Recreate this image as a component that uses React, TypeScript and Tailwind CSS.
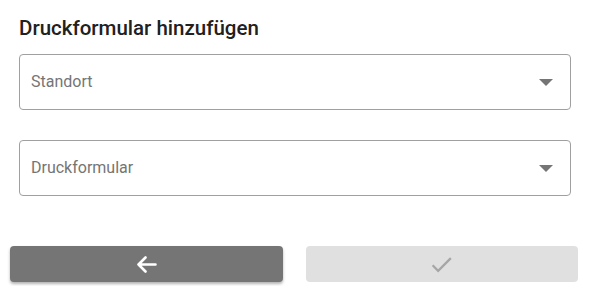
import React from 'react'

function SelectField({ label }: { label: string }) {
  return (
    <div className="h-[56px] flex items-center justify-between rounded-[4px] border border-[#a0a0a0] pl-[11px] pr-[17px] bg-white">
      <span className="text-[16px] text-[#757575]">{label}</span>
      <svg width="14" height="7" viewBox="0 0 14 7">
        <path d="M0 0 L14 0 L7 7 Z" fill="#757575" />
      </svg>
    </div>
  )
}

export default function App() {
  return (
    <div className="w-[591px] h-[286px] bg-white" style={{ fontFamily: 'Roboto, "Liberation Sans", sans-serif' }}>
      <div className="px-[19px] pt-[16px]">
        <h2 className="text-[20.5px] font-medium leading-[24px] text-[#212121]">Druckformular hinzufügen</h2>
        <div className="mt-[14px] flex flex-col gap-[30px] pr-[1px]">
          <SelectField label="Standort" />
          <SelectField label="Druckformular" />
        </div>
      </div>
      <div className="mt-[50px] flex gap-[23px] pl-[10px] pr-[13px]">
        <button className="flex-1 h-[36px] rounded-[4px] bg-[#757575] shadow-[0_2px_3px_rgba(0,0,0,0.3)] flex items-center justify-center">
          <svg width="21" height="17" viewBox="0 0 21 17" fill="none">
            <path d="M19.5 8.5H2.5M9.5 1.5L2.5 8.5L9.5 15.5" stroke="#ffffff" strokeWidth="2.6" strokeLinecap="round" strokeLinejoin="round" />
          </svg>
        </button>
        <button className="flex-1 h-[36px] rounded-[4px] bg-[#e0e0e0] flex items-center justify-center">
          <svg width="27" height="27" viewBox="0 0 24 24">
            <path d="M9 16.17L4.83 12l-1.42 1.41L9 19 21 7l-1.41-1.41z" fill="#a6a6a6" />
          </svg>
        </button>
      </div>
    </div>
  )
}
